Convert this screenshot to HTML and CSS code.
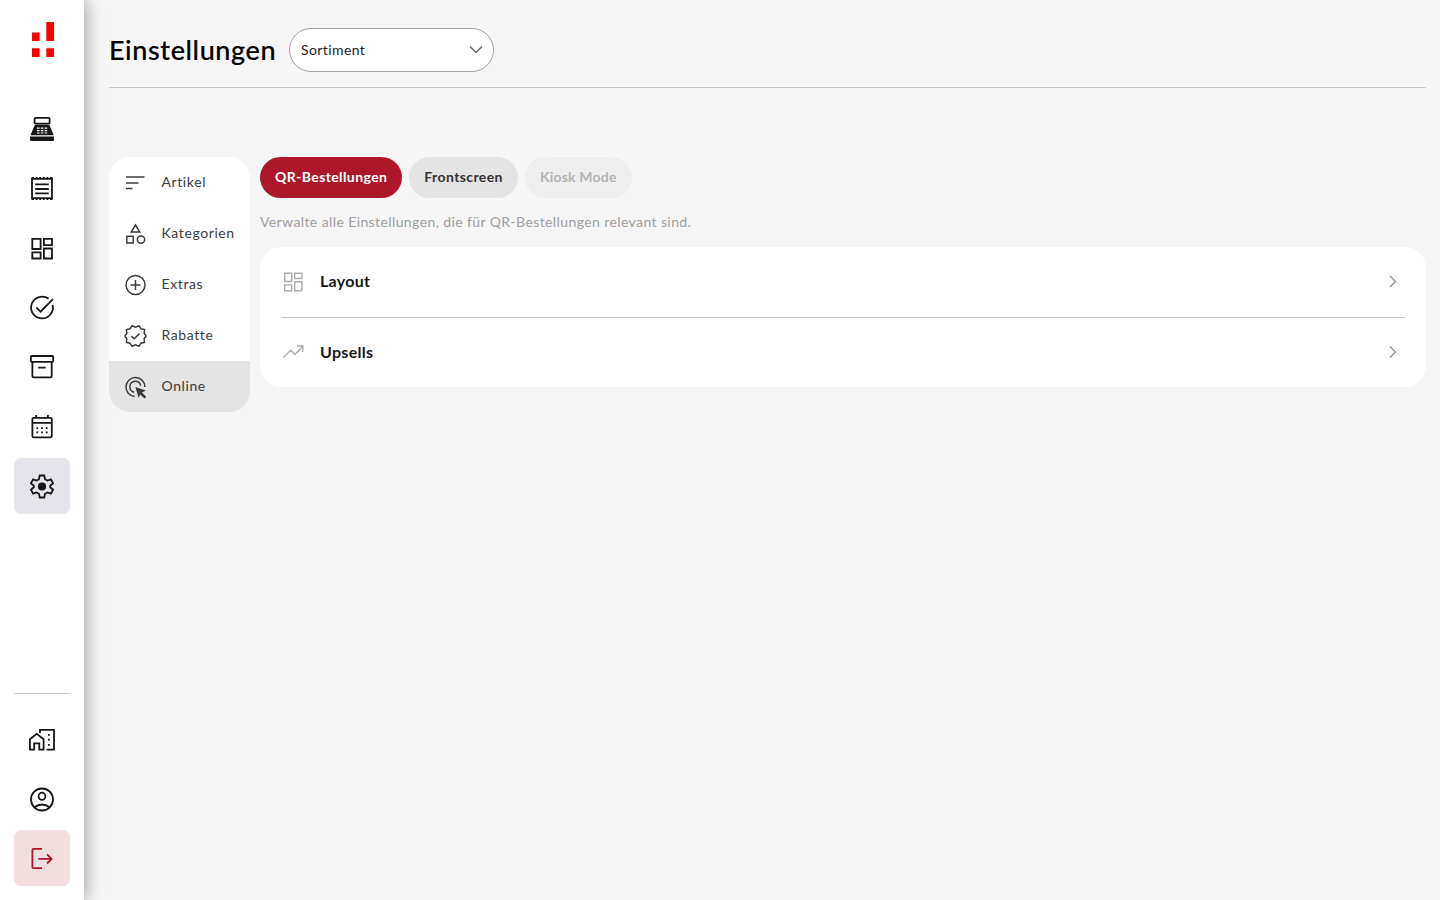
FILE: index.html
```
<!DOCTYPE html>
<html lang="de">
<head>
    <meta charset="UTF-8">
    <meta name="viewport" content="width=device-width, initial-scale=1.0">
    <title>Einstellungen</title>
    <link rel="stylesheet" href="styles.css">
</head>
<body>
    <aside class="sidebar">
        <a href="#" class="logo">
            <svg width="22" height="35" viewBox="0 0 22 35"><path d="M14.3 0H22v19h-7.700zM0 10.600h7.600V19H0zM0 26.300h7.600V35H0zM14.300 26.300H22V35h-7.700z"/></svg>
        </a>
        <nav class="nav">
            <a href="#" class="nav-item">
                <svg class="icon" viewBox="0 0 28 28"><rect x="6.6" y="2.8" width="15" height="5.8" rx="1"/><path class="fill" d="M8 9.8h12.4q1 0 1.4 1l3.6 8.8v.7H2.8v-.7l3.6-8.8q.4-1 1.600-1zM2 21.500h24v3.300q0 1.200-1.200 1.200H3.200Q2 26 2 24.800z"/><path class="keys" d="M9 13.200h2.600m1.200 0h2.600m1.200 0h2.600M9 15.600h2.600m1.200 0h2.600m1.200 0h2.600M9 18h2.600m1.200 0h2.600m1.200 0h2.600"/></svg>
            </a>
            <a href="#" class="nav-item">
                <svg class="icon" viewBox="0 0 28 28"><path d="M4 2.500v22M24 2.500v22M4 3.800h20M4 23.200h20"/><path d="M4 2.700h20M4 24.300h20" stroke-width="1.500" stroke-dasharray="2 1.600"/><path d="M7.200 9.400h13.600M7.200 14h13.600M7.200 18.400h13.600"/></svg>
            </a>
            <a href="#" class="nav-item">
                <svg class="icon" viewBox="0 0 28 28"><path d="M4.300 4.800h8.300V15H4.300zM15.900 4.800h8.100v6.300h-8.100zM15.900 14.500h8.100v10h-8.100zM4.300 18.300h8.300v6.200H4.300z"/></svg>
            </a>
            <a href="#" class="nav-item">
                <svg class="icon" viewBox="0 0 28 28"><path d="M20.600 4.800A10.900 10.900 0 1 0 24.600 10.900"/><path d="M8.300 13.300l4.300 4.300L25 5.100"/></svg>
            </a>
            <a href="#" class="nav-item">
                <svg class="icon" viewBox="0 0 28 28"><rect x="2.900" y="3" width="22.300" height="5.800" rx=".8"/><path d="M4.400 8.800V23q0 1.300 1.300 1.300h16.700q1.300 0 1.300-1.300V8.800M10.300 14.700h7.400"/></svg>
            </a>
            <a href="#" class="nav-item">
                <svg class="icon" viewBox="0 0 28 28"><rect x="4.400" y="4.900" width="19.400" height="19.400" rx="1.200"/><path d="M4.400 9.800h19.400M8.200 2.100v2.800M19.900 2.100v2.800"/><path class="dots" d="M9.300 15.100h.01M14 15.100h.01M18.700 15.100h.01M9.300 19.400h.01M14 19.400h.01M18.700 19.400h.01"/></svg>
            </a>
            <a href="#" class="nav-item active">
                <svg class="icon" viewBox="0 0 28 28"><path d="M11.700 3.500h4.600l.7 3.700 2.400 1.400 3.500-1.300 2.200 4-2.900 2.400v1.600l2.900 2.400-2.200 4-3.500-1.300-2.400 1.400-.7 3.700h-4.600l-.7-3.700-2.400-1.400-3.500 1.300-2.200-4 2.900-2.400v-1.600l-2.900-2.400 2.200-4 3.500 1.300L11 7.200z"/><circle class="fill" cx="14" cy="14.500" r="4.100"/></svg>
            </a>
        </nav>
        <div class="nav nav-bottom">
            <a href="#" class="nav-item">
                <svg class="icon" viewBox="0 0 28 28"><path d="M1.900 24.700V14.200L8.800 8.800l6.800 5.400v10.500h-4.300v-6.300H6.200v6.300zM12 8V4.800h14v19.900h-7.500"/><path class="dots" d="M20.900 9.800h.01M20.900 14.700h.01M20.900 19.800h.01"/></svg>
            </a>
            <a href="#" class="nav-item">
                <svg class="icon" viewBox="0 0 28 28"><circle cx="14" cy="14.500" r="11"/><ellipse cx="14" cy="11.300" rx="3.400" ry="3.600"/><path d="M6.600 22.300q3.200-2.800 7.400-2.800t7.400 2.800"/></svg>
            </a>
            <a href="#" class="nav-item logout">
                <svg class="icon" viewBox="0 0 28 28"><path d="M14 4.900H5.400q-1 0-1 1v17.200q0 1 1 1H14M10.500 14.900h13M19 10.300l4.600 4.600-4.600 4.600"/></svg>
            </a>
        </div>
    </aside>

    <main class="main">
        <header class="header">
            <h1>Einstellungen</h1>
            <button class="select">
                <span>Sortiment</span>
                <svg width="14" height="9" viewBox="0 0 14 9"><path d="M1 1.500l6 6 6-6"/></svg>
            </button>
        </header>

        <div class="settings">
            <nav class="menu">
                <a href="#" class="menu-item">
                    <svg viewBox="0 0 24 24"><path d="M3 6h18.500M3 12h12.500M3 17.500h6.500"/></svg>
                    <span>Artikel</span>
                </a>
                <a href="#" class="menu-item">
                    <svg viewBox="0 0 24 24"><path d="M12.500 3l4.200 6.900H8.300zM3.800 14.300h6.400v6.600H3.800z"/><circle cx="18" cy="17.600" r="3.700"/></svg>
                    <span>Kategorien</span>
                </a>
                <a href="#" class="menu-item">
                    <svg viewBox="0 0 24 24"><circle cx="12.500" cy="12" r="9.500"/><path d="M12.500 7v10M7.500 12h10"/></svg>
                    <span>Extras</span>
                </a>
                <a href="#" class="menu-item">
                    <svg viewBox="0 0 24 24"><path d="M12.500 3.200L16 1.700l2 3.100 3.600.8-.4 3.700 1.900 2.700-2 2.700.4 3.700-3.600.8-2 3.100-3.400-1.500L9 22.300l-2-3.100-3.600-.8.4-3.700L1.900 12l2-2.700-.5-3.700L7 4.800l2-3.100z"/><path d="M8.500 12.100l2.800 2.700 5.100-5.200"/></svg>
                    <span>Rabatte</span>
                </a>
                <a href="#" class="menu-item active">
                    <svg viewBox="0 0 24 24"><path d="M11.600 21.500A9.500 9.500 0 1 1 22 12M11.100 17.200A5.500 5.500 0 1 1 17.700 10.600"/><path class="cursor" d="M12.300 12l10.500 3.600-3.800 2 4.200 4.200-1.800 1.800-4.200-4.200-1.500 3.500z"/></svg>
                    <span>Online</span>
                </a>
            </nav>

            <section class="content">
                <div class="tabs">
                    <button class="tab tab-active">QR-Bestellungen</button>
                    <button class="tab">Frontscreen</button>
                    <button class="tab tab-kiosk" disabled>Kiosk Mode</button>
                </div>
                <p class="description">Verwalte alle Einstellungen, die für QR-Bestellungen relevant sind.</p>
                <div class="card">
                    <a href="#" class="row">
                        <svg class="row-icon" viewBox="0 0 24 24"><path d="M3.700 3.200h7v8.300h-7zM13.700 3.200h7.200v5.300h-7.200zM13.700 11.800h7.200v8.900h-7.200zM3.700 14.900h7v5.800h-7z"/></svg>
                        <span>Layout</span>
                        <svg class="arrow" viewBox="0 0 8 14"><path d="M1 1L6.500 6.500 1 12"/></svg>
                    </a>
                    <a href="#" class="row">
                        <svg class="row-icon" viewBox="0 0 24 24"><path d="M2.500 16.500l7.200-7.300 4.200 4.200 7.800-8M16 5h5.800v5.800"/></svg>
                        <span>Upsells</span>
                        <svg class="arrow" viewBox="0 0 8 14"><path d="M1 0.500L6.500 6 1 11.500"/></svg>
                    </a>
                </div>
            </section>
        </div>
    </main>
</body>
</html>
```
FILE: styles.css
```
*{box-sizing:border-box;margin:0;padding:0;}
body{display:flex;height:100vh;overflow:hidden;background:#f6f6f6;color:#111;font-family:Lato, "Open Sans", sans-serif;font-size:14px;letter-spacing:.4px;}
a{color:inherit;text-decoration:none;}
button{border:0;font:inherit;letter-spacing:inherit;cursor:pointer;}
svg{display:block;flex:none;fill:none;stroke:currentColor;}

/* sidebar */
.sidebar{display:flex;flex-direction:column;align-items:center;flex:none;width:84px;padding:22px 14px 14px;background:#fff;box-shadow:2px 0 16px rgba(0,0,0,.35);}
.logo{margin-left:2px;}
.logo svg{fill:#f00;stroke:none;}
.nav{display:flex;flex-direction:column;gap:3.5px;margin-top:44px;}
.nav-item{display:flex;align-items:center;justify-content:center;width:56px;height:56px;border-radius:7px;color:#171717;}
.nav-item.active{background:#e5e4eb;}
.nav-item.logout{background:#f2dddf;color:#ac1829;}
.nav-bottom{margin-top:auto;padding-top:17px;border-top:1px solid #c8c8c8;}
.icon{width:28px;height:28px;stroke-width:1.8;}
.icon .fill{fill:currentColor;stroke:none;}
.icon .keys{stroke:#fff;stroke-width:1.2;}
.icon .dots{stroke-linecap:square;}

/* header */
.main{flex:1;padding:0 14px 0 25px;}
.header{display:flex;align-items:center;height:88px;padding-top:12px;border-bottom:1px solid #c8c8c8;}
h1{width:180px;padding-bottom:1px;color:#000;font-size:27px;font-weight:500;letter-spacing:.6px;-webkit-text-stroke:.2px #000;}
.select{display:flex;align-items:center;justify-content:space-between;width:205px;height:44px;padding:0 10px 0 11px;border:1px solid #a0a0a0;border-radius:22px;background:#fff;color:#222;}
.select svg{stroke:#666;stroke-width:1.5;}

/* settings */
.settings{display:flex;align-items:flex-start;gap:10px;margin-top:69px;}
.menu{flex:none;width:141px;border-radius:21px;background:#fff;overflow:hidden;}
.menu-item{display:flex;align-items:center;gap:14.5px;height:51px;padding-left:14px;color:#3c3c3c;letter-spacing:.6px;}
.menu-item span{padding-bottom:2px;}
.menu-item.active{background:#e4e4e4;}
.menu-item svg{width:24px;height:24px;stroke-width:1.5;}
.menu-item .cursor{fill:currentColor;stroke:none;}
.content{flex:1;}
.tabs{display:flex;gap:7px;}
.tab{height:41px;padding:0 15px 2px;border-radius:21px;background:#e4e4e4;color:#333;font-weight:700;}
.tab-active{background:#ac1829;color:#fff;}
.tab-kiosk{background:#eee;color:#b3b3b3;letter-spacing:.2px;}
.description{height:49px;color:#a0a0a0;line-height:47px;}
.card{padding:0 21px;border-radius:21px;background:#fff;}
.row{display:flex;align-items:center;height:70px;color:#171717;font-size:16px;font-weight:700;letter-spacing:.3px;}
.row + .row{border-top:1px solid #c8c8c8;}
.row span{padding-bottom:3px;}
.row + .row span{padding-bottom:2px;}
.row-icon{width:24px;height:24px;margin-right:15px;color:#aaa;stroke-width:1.4;}
.arrow{width:8px;height:14px;margin:0 8px 0 auto;color:#999;stroke-width:1.5;}
```
